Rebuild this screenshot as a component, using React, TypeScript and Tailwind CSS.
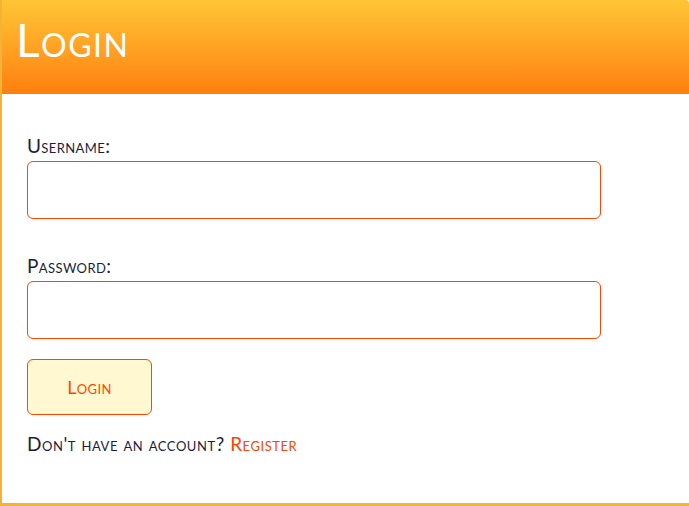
import React from "react";

export default function App() {
  return (
    <div className="h-[506px] w-[689px] bg-white font-['Lato',sans-serif] [font-variant:small-caps]">
      <div className="flex h-full flex-col overflow-hidden rounded-tr-[3px] border-b-[3px] border-l-2 border-[#f3b436]">
        <div className="flex h-[94px] items-start bg-gradient-to-b from-[#ffc535] to-[#ff7f0e] pl-[14px] pt-[14px]">
          <h1 className="text-[46px] leading-[52px] tracking-[1.5px] text-white">Login</h1>
        </div>

        <form className="flex flex-col px-[25px] pt-[41px]">
          <label className="mb-[4px] text-[19px] leading-[22px] tracking-[0.4px] text-[#1c1c3a]">Username:</label>
          <input
            type="text"
            className="h-[58px] w-[574px] rounded-[6px] border border-[#ff4500] px-3 focus:outline-none"
          />

          <label className="mb-[4px] mt-[36px] text-[19px] leading-[22px] tracking-[0.4px] text-[#1c1c3a]">Password:</label>
          <input
            type="password"
            className="h-[58px] w-[574px] rounded-[6px] border border-[#ff4500] px-3 focus:outline-none"
          />

          <button
            type="button"
            className="mt-[20px] h-[56px] w-[125px] rounded-[6px] border border-[#ff4500] bg-[#fff8d0] text-[18px] tracking-[0.4px] text-[#ff4500] [font-variant:small-caps]"
          >
            Login
          </button>

          <p className="mt-[18px] text-[19px] leading-[22px] tracking-[0.55px] text-[#1c1c3a]">
            Don't have an account? <a className="text-[#ff4500]">Register</a>
          </p>
        </form>
      </div>
    </div>
  );
}
